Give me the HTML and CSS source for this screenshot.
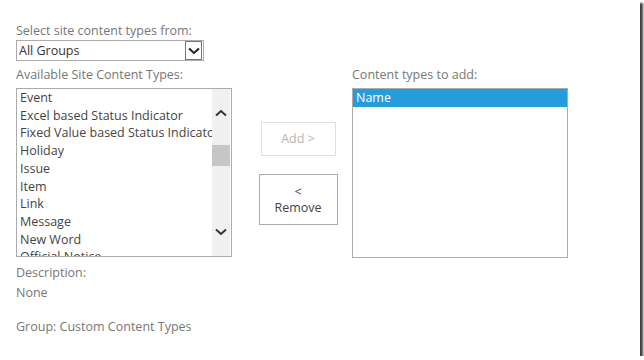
FILE: index.html
```html
<!DOCTYPE html>
<html lang="en">
<head>
    <meta charset="UTF-8">
    <meta name="viewport" content="width=device-width, initial-scale=1.0">
    <title>Add Content Types</title>
    <link rel="stylesheet" href="styles.css">
</head>
<body>
    <div class="frame">
        <div class="picker">
            <div class="field-label">Select site content types from:</div>
            <div class="dropdown">
                <span class="dropdown-value">All Groups</span>
                <span class="dropdown-btn">
                    <svg width="12" height="8" viewBox="0 0 12 8"><path d="M1 1.5 L6 6 L11 1.5" fill="none" stroke="#222" stroke-width="2"/></svg>
                </span>
            </div>
        </div>

        <div class="lists">
            <div class="col">
                <div class="field-label gap">Available Site Content Types:</div>
                <div class="listbox">
                    <div class="items">
                        <div class="item">Event</div>
                        <div class="item">Excel based Status Indicator</div>
                        <div class="item">Fixed Value based Status Indicator</div>
                        <div class="item">Holiday</div>
                        <div class="item">Issue</div>
                        <div class="item">Item</div>
                        <div class="item">Link</div>
                        <div class="item">Message</div>
                        <div class="item">New Word</div>
                        <div class="item">Official Notice</div>
                    </div>
                    <div class="scrollbar">
                        <div class="scroll-arrow">
                            <svg width="12" height="8" viewBox="0 0 12 8"><path d="M1 6.5 L6 2 L11 6.5" fill="none" stroke="#333" stroke-width="2"/></svg>
                        </div>
                        <div class="scroll-thumb"></div>
                        <div class="scroll-space"></div>
                        <div class="scroll-arrow">
                            <svg width="12" height="8" viewBox="0 0 12 8"><path d="M1 1.5 L6 6 L11 1.5" fill="none" stroke="#333" stroke-width="2"/></svg>
                        </div>
                    </div>
                </div>
                <div class="desc">
                    <div>Description:</div>
                    <div>None</div>
                </div>
                <div class="group">Group: Custom Content Types</div>
            </div>

            <div class="actions">
                <button class="btn disabled">Add &gt;</button>
                <button class="btn remove">&lt;<br>Remove</button>
            </div>

            <div class="col">
                <div class="field-label gap">Content types to add:</div>
                <div class="listbox tall">
                    <div class="items">
                        <div class="item selected">Name</div>
                    </div>
                </div>
            </div>
        </div>
    </div>
</body>
</html>
```

FILE: styles.css
```css
body {
    margin: 0;
    background: #fff;
    font-family: "Open Sans", "Noto Sans", Arial, sans-serif;
    font-size: 12.5px;
    color: #444;
}
.frame {
    width: 624px;
    height: 334px;
    padding: 22px 0 0 16px;
    background: #fff;
    box-shadow: 3px 3px 2px rgba(0, 0, 0, 0.75);
}
.field-label {
    color: #777;
    line-height: 17px;
}
.field-label.gap {
    margin: 5px 0 5px;
}
.dropdown {
    margin-top: 1px;
    width: 186px;
    height: 19px;
    border: 1px solid #ababab;
    display: flex;
    align-items: center;
    justify-content: space-between;
    color: #333;
}
.dropdown-value {
    padding-left: 2px;
}
.dropdown-btn {
    width: 17px;
    height: 19px;
    margin-right: 1px;
    border: 1px solid #777;
    box-sizing: border-box;
    display: flex;
    align-items: center;
    justify-content: center;
}
.lists {
    display: flex;
}
.col {
    width: 216px;
}
.listbox {
    width: 214px;
    height: 167px;
    border: 1px solid #ababab;
    display: flex;
    overflow: hidden;
}
.listbox.tall {
    height: 168px;
}
.items {
    flex: 1;
    overflow: hidden;
    white-space: nowrap;
}
.item {
    line-height: 17.7px;
    padding-left: 3px;
}
.item.selected {
    background: #259cdc;
    color: #fff;
    line-height: 18px;
}
.scrollbar {
    width: 18px;
    margin-right: 1px;
    background: #f0f0f0;
    display: flex;
    flex-direction: column;
}
.scroll-arrow {
    height: 48px;
    display: flex;
    align-items: center;
    justify-content: center;
}
.scroll-thumb {
    margin-top: 8px;
    height: 21px;
    background: #c6c6c6;
}
.scroll-space {
    flex: 1;
}
.desc {
    margin-top: 6px;
    color: #777;
    line-height: 20px;
}
.group {
    margin-top: 14px;
    color: #777;
    line-height: 20px;
}
.actions {
    width: 108px;
    padding-left: 12px;
    display: flex;
    flex-direction: column;
    align-items: center;
}
.btn {
    font: inherit;
    background: #fff;
    border: 1px solid #ababab;
    color: #444;
    line-height: 16px;
}
.btn.disabled {
    margin-top: 61px;
    width: 75px;
    height: 34px;
    border-color: #e0e0e0;
    color: #b5b5b5;
}
.btn.remove {
    margin-top: 18px;
    width: 79px;
    height: 51px;
}
```
